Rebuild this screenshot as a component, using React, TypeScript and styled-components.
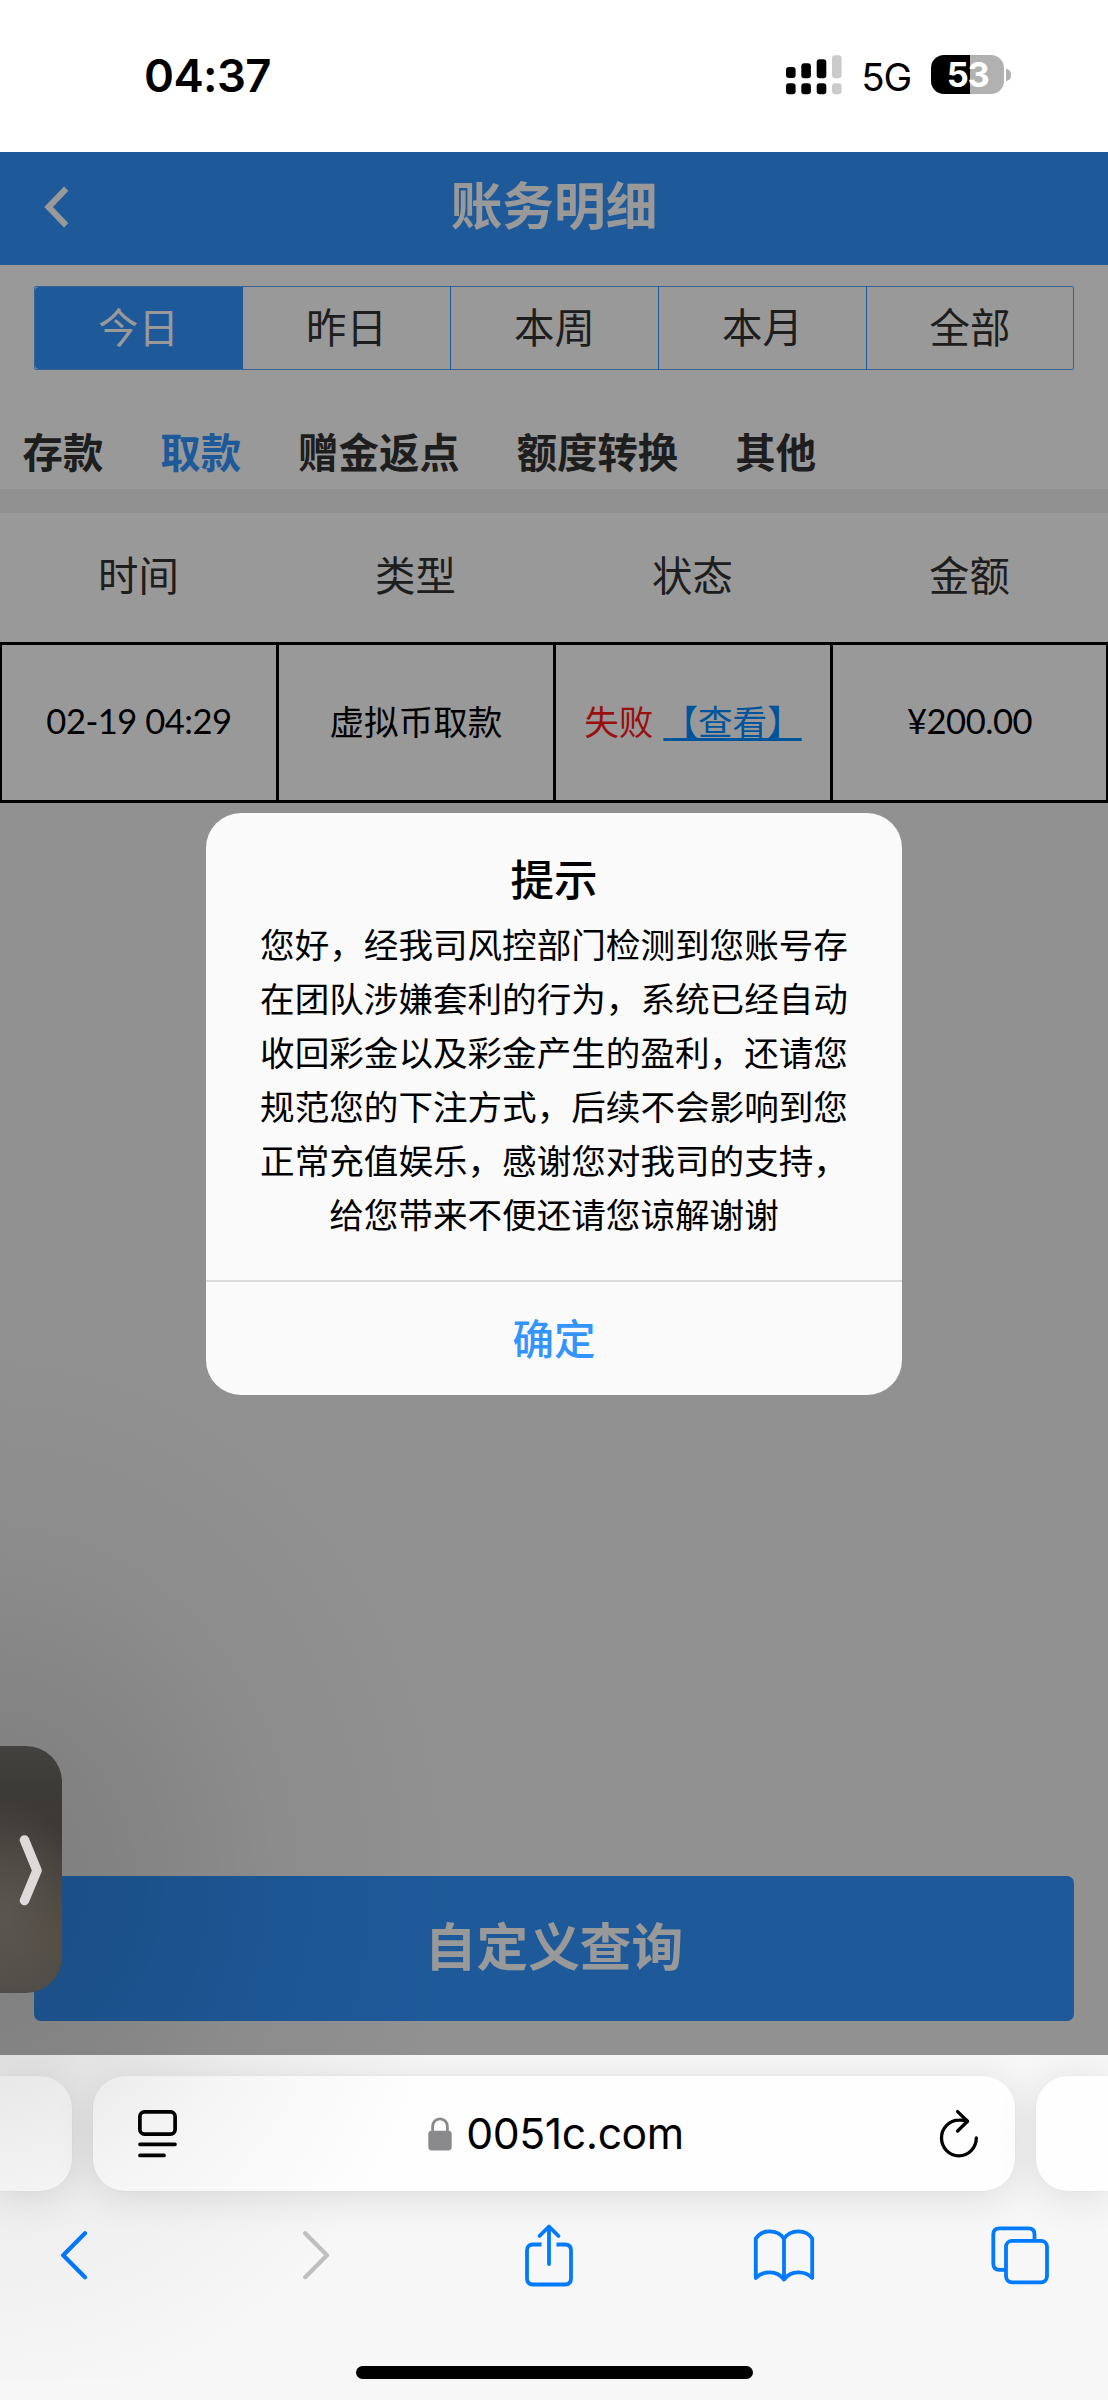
import React from "react";
import styled, { createGlobalStyle, css } from "styled-components";

const cjk = `"Noto Sans CJK SC", sans-serif`;
const brand = "#3394ff";

const GlobalStyle = createGlobalStyle`
  * { box-sizing: border-box; }
  body { margin: 0; background: #fff; font-family: "Inter", ${cjk}; }
`;

const Screen = styled.div`
  position: relative;
  width: 1108px;
  height: 2400px;
  display: flex;
  flex-direction: column;
  overflow: hidden;
`;

/* ---------- status bar ---------- */

const StatusBar = styled.div`
  height: 152px;
  flex: none;
  display: flex;
  align-items: center;
  padding: 0 97px 3px 144px;
  color: #000;
`;

const Clock = styled.span`
  font-size: 45.5px;
  font-weight: 600;
  line-height: 56px;
  letter-spacing: -0.6px;
  margin: 2px auto 0 0;
`;

const Network = styled.span`
  font-size: 38.5px;
  line-height: 48px;
  letter-spacing: -1.2px;
  margin: 4px 20px 0 19px;
`;

const Battery = styled.div`
  width: 73px;
  height: 39px;
  border-radius: 13px;
  display: flex;
  align-items: center;
  justify-content: center;
  background: linear-gradient(90deg, #000 53%, #b1b1b1 53%);
  color: #fff;
  font-size: 34.5px;
  font-weight: 700;
  letter-spacing: -1.5px;
`;

const BatteryTip = styled.span`
  width: 5px;
  height: 12px;
  margin-left: 2px;
  border-radius: 0 5px 5px 0;
  background: #b1b1b1;
`;

/* ---------- web page ---------- */

const Page = styled.main`
  position: relative;
  height: 1903px;
  flex: none;
  display: flex;
  flex-direction: column;
  background: #f2f2f2;
  font-family: ${cjk};
`;

const TitleBar = styled.header`
  height: 113px;
  flex: none;
  display: grid;
  grid-template-columns: 114px 1fr 114px;
  align-items: center;
  background: ${brand};
  color: #fff;
`;

const BackButton = styled.div`
  display: flex;
  padding: 0 0 3px 43px;
`;

const PageTitle = styled.h1`
  margin: 0;
  padding-bottom: 11px;
  text-align: center;
  font-size: 51.7px;
  line-height: 70px;
  font-weight: 600;
`;

const Filters = styled.section`
  height: 224px;
  flex: none;
  padding: 21px 34px 0;
  background: #fff;
  color: #333;
`;

const Periods = styled.div`
  height: 84px;
  display: grid;
  grid-template-columns: 208px 208px 208px 208px 1fr;
  border: 1px solid #5aa6fa;
  border-radius: 2px;
`;

const Period = styled.div<{ $active?: boolean }>`
  display: flex;
  align-items: center;
  justify-content: center;
  padding: 0 0 4px 0;
  font-size: 40.4px;
  line-height: 50px;
  border-right: 1.5px solid ${brand};
  ${(p) =>
    p.$active &&
    css`
      background: ${brand};
      color: #fff;
      border-radius: 4px 0 0 4px;
    `}
  &:last-child {
    border-right: 0;
  }
`;

const Kinds = styled.nav`
  display: flex;
  gap: 57px;
  margin: 51px -34px 0;
  padding-left: 22.5px;
`;

const Kind = styled.span<{ $active?: boolean }>`
  font-size: 40.4px;
  line-height: 60px;
  font-weight: 600;
  color: ${(p) => (p.$active ? brand : "#333")};
`;

const Columns = styled.div`
  height: 129px;
  flex: none;
  margin-top: 24px;
  display: grid;
  grid-template-columns: repeat(4, 1fr);
  align-items: center;
  text-align: center;
  padding-bottom: 7px;
  background: #fff;
  color: #333;
  font-size: 40.4px;
  line-height: 60px;
`;

const Row = styled.div`
  height: 161px;
  flex: none;
  display: grid;
  grid-template-columns: 276px 277px 277px 276px;
  background: #fff;
  color: #000;
  border: 0 solid #000;
  border-width: 3px 1px;
`;

const Cell = styled.div<{ $numeric?: boolean }>`
  display: flex;
  align-items: center;
  justify-content: center;
  padding-bottom: 6px;
  border: 0 solid #000;
  border-left-width: 2px;
  border-right-width: 1px;
  white-space: pre;
  font-size: 34.6px;
  line-height: 50px;
  &:first-child {
    border-left-width: 1px;
  }
  ${(p) =>
    p.$numeric &&
    css`
      font-family: "Lato", ${cjk};
      letter-spacing: -0.5px;
      padding-bottom: 3px;
    `}
`;

const Failed = styled.span`
  color: #ff1a1a;
  margin-right: 10px;
`;

const ViewLink = styled.span`
  color: #008cff;
  text-decoration: underline;
  text-decoration-thickness: 2.5px;
  text-underline-offset: 3px;
  text-decoration-skip-ink: none;
`;

const QueryButton = styled.div`
  height: 145px;
  margin: auto 34px 34px;
  display: flex;
  align-items: center;
  justify-content: center;
  padding-bottom: 11px;
  border-radius: 7px;
  background: ${brand};
  color: #fff;
  font-size: 51.7px;
  font-weight: 600;
`;

/* ---------- dialog ---------- */

const Mask = styled.div`
  position: absolute;
  inset: 0;
  display: flex;
  align-items: center;
  justify-content: center;
  background: rgba(0, 0, 0, 0.4);
`;

const Dialog = styled.div`
  width: 696px;
  height: 582px;
  display: flex;
  flex-direction: column;
  align-items: center;
  border-radius: 35px;
  background: #fafafa;
  color: #000;
  text-align: center;
`;

const DialogTitle = styled.h2`
  margin: 34px 0 0;
  font-size: 43.6px;
  line-height: 60px;
  font-weight: 500;
`;

const DialogText = styled.p`
  margin: 9px 0 0;
  width: 592px;
  font-size: 34.6px;
  line-height: 54.15px;
`;

const DialogButton = styled.div`
  width: 100%;
  height: 115px;
  margin-top: auto;
  display: flex;
  align-items: center;
  justify-content: center;
  padding-bottom: 3px;
  border-top: 2px solid #dcdcdc;
  color: ${brand};
  font-size: 41.5px;
  font-weight: 500;
`;

/* ---------- floating handle ---------- */

const Glow = styled.div`
  position: absolute;
  left: 0;
  top: 1280px;
  width: 560px;
  height: 1100px;
  background: radial-gradient(
    ellipse 480px 540px at -20px 600px,
    rgba(0, 0, 0, 0.13),
    rgba(0, 0, 0, 0.1) 28%,
    rgba(0, 0, 0, 0.035) 62%,
    rgba(0, 0, 0, 0) 100%
  );
`;

const Handle = styled.div`
  position: absolute;
  left: 0;
  top: 1746px;
  width: 62px;
  height: 247px;
  display: flex;
  align-items: center;
  justify-content: flex-end;
  padding-right: 18px;
  border-radius: 0 36px 36px 0;
  background: radial-gradient(ellipse 80px 120px at 4px 172px, #5a5650, rgba(90, 86, 80, 0) 100%),
    linear-gradient(180deg, #434240 0%, #3d3b37 18%, #3e3935 32%, #48423b 55%, #544c43 80%, #4c4945 100%);
`;

/* ---------- browser bar ---------- */

const Browser = styled.footer`
  height: 345px;
  flex: none;
  padding-top: 21px;
  display: flex;
  flex-direction: column;
  background: #f7f7f7;
`;

const AddressRow = styled.div`
  display: grid;
  grid-template-columns: 72px 922px 72px;
  column-gap: 21px;
`;

const cardShadow = css`
  height: 115px;
  background: #fefefe;
  box-shadow: 0 6px 42px rgba(0, 0, 0, 0.11), 0 0 2px rgba(0, 0, 0, 0.05);
`;

const TabEdge = styled.div<{ $side: "left" | "right" }>`
  ${cardShadow}
  border-radius: ${(p) => (p.$side === "left" ? "0 32px 32px 0" : "32px 0 0 32px")};
`;

const Address = styled.div`
  ${cardShadow}
  border-radius: 32px;
  display: grid;
  grid-template-columns: 100px 1fr 100px;
  align-items: center;
  padding: 0 36px 0 43px;
`;

const Domain = styled.div`
  display: flex;
  align-items: center;
  justify-content: center;
  gap: 14px;
  padding-right: 3px;
  color: #000;
  font-size: 42.7px;
  line-height: 52px;
  letter-spacing: -0.4px;
`;

const EndSlot = styled.div`
  display: flex;
  justify-content: flex-end;
`;

const Tools = styled.div`
  display: grid;
  grid-template-columns: 242px 223px 229px 237px 60px;
  align-items: center;
  height: 70px;
  margin-top: 29px;
  padding-left: 59px;
`;

const HomeIndicator = styled.div`
  width: 397px;
  height: 13px;
  margin: auto auto 21px;
  border-radius: 7px;
  background: #000;
`;

/* ---------- icons ---------- */

const SignalIcon = () => (
  <svg width="56" height="40" viewBox="0 0 56 40">
    {[
      [0, 12, 11],
      [15.3, 8.3, 15],
      [30.7, 4.3, 19],
      [46, 0.3, 23],
    ].map(([x, y, h]) => (
      <g key={x} fill={x === 46 ? "#cbcbcb" : "#000"}>
        <rect x={x} y={y} width="9.6" height={h} rx="3" />
        <rect x={x} y="28.3" width="9.6" height="11" rx="3" />
      </g>
    ))}
  </svg>
);

const Chevron = ({ color, right }: { color: string; right?: boolean }) => (
  <svg width="30" height="50" viewBox="0 0 30 50" fill="none" stroke={color} strokeWidth="4.2" strokeLinecap="round" strokeLinejoin="round">
    <path d={right ? "M4.2 3.2L26 25.2L4.2 47.2" : "M26 3.2L4.2 25.2L26 47.2"} />
  </svg>
);

const BackIcon = () => (
  <svg width="28" height="42" viewBox="0 0 28 42" fill="none" stroke="#fff" strokeWidth="6.2">
    <path d="M23.2 2.6L5.6 21L23.2 39.4" />
  </svg>
);

const ReaderIcon = () => (
  <svg width="42" height="48" viewBox="0 0 42 48" fill="none" stroke="#000" strokeWidth="3.7" strokeLinecap="round">
    <rect x="3.9" y="1.9" width="35.2" height="22.2" rx="4.5" />
    <path d="M4 34.3H39M4 45.4H28" />
  </svg>
);

const LockIcon = () => (
  <svg width="24" height="34" viewBox="0 0 24 34">
    <path d="M4.6 15V9.4a7.4 7.6 0 0 1 14.8 0V15" fill="none" stroke="#8a8a8c" strokeWidth="2.8" />
    <rect x="0.3" y="13.8" width="23.4" height="19.7" rx="3.4" fill="#8a8a8c" />
  </svg>
);

const ReloadIcon = () => (
  <svg width="40" height="50" viewBox="0 0 40 50" fill="none" stroke="#000" strokeWidth="3.3" strokeLinecap="round" strokeLinejoin="round">
    <path d="M37.3 29A17.4 17.8 0 1 1 19.9 11.2Q25 11 28.5 12.3" />
    <path d="M18.6 2.6L28.5 12.3L18.6 22" />
  </svg>
);

const ShareIcon = () => (
  <svg width="50" height="64" viewBox="0 0 50 64" fill="none" stroke="#007aff" strokeWidth="3.8" strokeLinecap="round" strokeLinejoin="round">
    <path d="M17.5 21.5H9Q3 21.5 3 27.5V55.5Q3 61.5 9 61.5H41Q47 61.5 47 55.5V27.5Q47 21.5 41 21.5H32.5" strokeLinecap="butt" />
    <path d="M25 41V4.5M15.5 13L25 3.5L34.5 13" />
  </svg>
);

const BookIcon = () => (
  <svg width="62" height="54" viewBox="0 0 62 54" fill="none" stroke="#007aff" strokeWidth="3.8" strokeLinecap="round" strokeLinejoin="round">
    <path d="M31 10.5C24 1 9 1 2.8 10.5V50C10 42.5 24 42 31 51.5C38 42 52 42.5 59.2 50V10.5C53 1 38 1 31 10.5Z" />
    <path d="M31 10.5V51" />
  </svg>
);

const TabsIcon = () => (
  <svg width="60" height="60" viewBox="0 0 60 60" fill="none" stroke="#007aff" strokeWidth="3.8">
    <rect x="16" y="15.8" width="41" height="41.5" rx="6" />
    <path d="M15.5 44.8H9.3Q3.3 44.8 3.3 38.8V9.3Q3.3 3.3 9.3 3.3H38.5Q44.5 3.3 44.5 9.3V15.5" />
  </svg>
);

const HandleArrow = () => (
  <svg width="26" height="72" viewBox="0 0 26 72" fill="none" stroke="#dedada" strokeWidth="9.6" strokeLinecap="round" strokeLinejoin="round">
    <path d="M6.5 6L19 36.5L6.5 66.5" />
  </svg>
);

const periods = ["今日", "昨日", "本周", "本月", "全部"];
const kinds = ["存款", "取款", "赠金返点", "额度转换", "其他"];
const columns = ["时间", "类型", "状态", "金额"];

export default function App() {
  return (
    <Screen>
      <GlobalStyle />
      <StatusBar>
        <Clock>04:37</Clock>
        <SignalIcon />
        <Network>5G</Network>
        <Battery>53</Battery>
        <BatteryTip />
      </StatusBar>

      <Page>
        <TitleBar>
          <BackButton>
            <BackIcon />
          </BackButton>
          <PageTitle>账务明细</PageTitle>
        </TitleBar>
        <Filters>
          <Periods>
            {periods.map((p, i) => (
              <Period key={p} $active={i === 0}>
                {p}
              </Period>
            ))}
          </Periods>
          <Kinds>
            {kinds.map((k) => (
              <Kind key={k} $active={k === "取款"}>
                {k}
              </Kind>
            ))}
          </Kinds>
        </Filters>
        <Columns>
          {columns.map((c) => (
            <span key={c}>{c}</span>
          ))}
        </Columns>
        <Row>
          <Cell $numeric>02-19 04:29</Cell>
          <Cell>虚拟币取款</Cell>
          <Cell>
            <Failed>失败</Failed>
            <ViewLink>【查看】</ViewLink>
          </Cell>
          <Cell $numeric>¥200.00</Cell>
        </Row>
        <QueryButton>自定义查询</QueryButton>

        <Mask>
          <Dialog>
            <DialogTitle>提示</DialogTitle>
            <DialogText>
              您好，经我司风控部门检测到您账号存在团队涉嫌套利的行为，系统已经自动收回彩金以及彩金产生的盈利，还请您规范您的下注方式，后续不会影响到您正常充值娱乐，感谢您对我司的支持，给您带来不便还请您谅解谢谢
            </DialogText>
            <DialogButton>确定</DialogButton>
          </Dialog>
        </Mask>
      </Page>

      <Browser>
        <AddressRow>
          <TabEdge $side="left" />
          <Address>
            <ReaderIcon />
            <Domain>
              <LockIcon />
              0051c.com
            </Domain>
            <EndSlot>
              <ReloadIcon />
            </EndSlot>
          </Address>
          <TabEdge $side="right" />
        </AddressRow>
        <Tools>
          <Chevron color="#007aff" />
          <Chevron color="#bfbfbf" right />
          <ShareIcon />
          <BookIcon />
          <TabsIcon />
        </Tools>
        <HomeIndicator />
      </Browser>

      <Glow />
      <Handle>
        <HandleArrow />
      </Handle>
    </Screen>
  );
}
